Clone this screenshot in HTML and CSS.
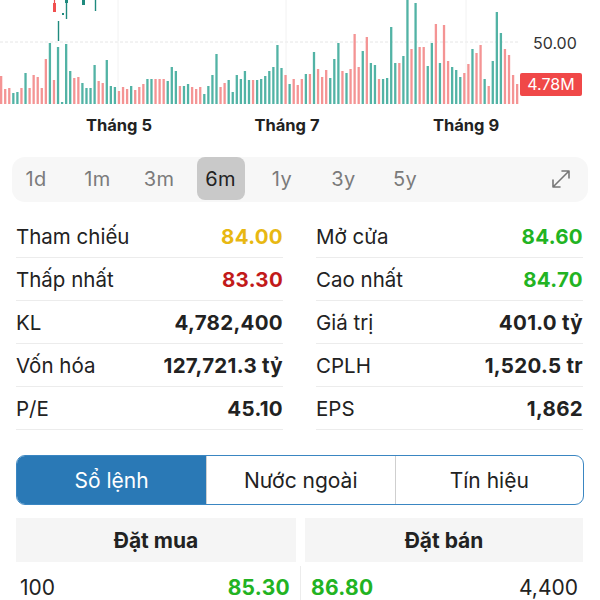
FILE: index.html
```html
<!DOCTYPE html>
<html lang="vi">
<head>
<meta charset="utf-8">
<link rel="stylesheet" href="styles.css">
</head>
<body>
<div class="chart">
  <svg id="bars" class="chart-svg" width="600" height="112" viewBox="0 0 600 112">
    <line x1="0" y1="42" x2="518" y2="42" class="grid" />
    <line x1="118" y1="0" x2="118" y2="104" class="vgrid" />
    <line x1="286" y1="0" x2="286" y2="104" class="vgrid" />
    <line x1="466" y1="0" x2="466" y2="104" class="vgrid" />
    <g id="volbars"></g>
    <rect x="53" y="3" width="3" height="9" class="candle-red" />
    <line x1="54.5" y1="0" x2="54.5" y2="3" class="wick-red" />
    <rect x="65" y="0" width="3" height="3" class="candle-teal" />
    <line x1="66.5" y1="0" x2="66.5" y2="19" class="wick-teal" />
    <rect x="62" y="13" width="2" height="2" class="candle-teal" />
    <line x1="58.5" y1="21" x2="58.5" y2="41" class="wick-teal" />
    <rect x="82" y="0" width="3" height="5" class="candle-teal" />
    <line x1="95.5" y1="0" x2="95.5" y2="11" class="wick-teal" />
  </svg>
  <div class="axis-price">50.00</div>
  <div class="axis-vol">4.78M</div>
</div>
<div class="months">
  <span class="month m5">Tháng 5</span>
  <span class="month m7">Tháng 7</span>
  <span class="month m9">Tháng 9</span>
</div>

<div class="ranges">
  <span class="range">1d</span>
  <span class="range">1m</span>
  <span class="range">3m</span>
  <span class="range active">6m</span>
  <span class="range">1y</span>
  <span class="range">3y</span>
  <span class="range">5y</span>
  <span class="spacer"></span>
  <svg class="expand" width="22" height="22" viewBox="0 0 22 22">
    <path d="M3 19 L19 3 M12 3 H19 V10 M3 12 V19 H10" fill="none" stroke="#777" stroke-width="1.6" stroke-linecap="round" stroke-linejoin="round"/>
  </svg>
</div>

<div class="stats">
  <div class="col">
    <div class="row"><span class="lbl">Tham chiếu</span><span class="val yellow">84.00</span></div>
    <div class="row"><span class="lbl">Thấp nhất</span><span class="val red">83.30</span></div>
    <div class="row"><span class="lbl">KL</span><span class="val">4,782,400</span></div>
    <div class="row"><span class="lbl">Vốn hóa</span><span class="val">127,721.3 tỷ</span></div>
    <div class="row"><span class="lbl">P/E</span><span class="val">45.10</span></div>
  </div>
  <div class="col">
    <div class="row"><span class="lbl">Mở cửa</span><span class="val green">84.60</span></div>
    <div class="row"><span class="lbl">Cao nhất</span><span class="val green">84.70</span></div>
    <div class="row"><span class="lbl">Giá trị</span><span class="val">401.0 tỷ</span></div>
    <div class="row"><span class="lbl">CPLH</span><span class="val">1,520.5 tr</span></div>
    <div class="row"><span class="lbl">EPS</span><span class="val">1,862</span></div>
  </div>
</div>

<div class="tabs">
  <div class="tab active">Sổ lệnh</div>
  <div class="tab">Nước ngoài</div>
  <div class="tab">Tín hiệu</div>
</div>

<div class="book-head">
  <div class="bh">Đặt mua</div>
  <div class="bh">Đặt bán</div>
</div>
<div class="book-row">
  <div class="side buy"><span class="qty">100</span><span class="px green">85.30</span></div>
  <div class="side sell"><span class="px green">86.80</span><span class="qty">4,400</span></div>
</div>
<script src="app.js"></script>
</body>
</html>
```

FILE: app.js
```js
(function () {
  var data = "76r89r88r93t92t88r73t88r75r77r88r59r43t80r47t102t44t71t78r77r83t88t88t65t81r83r60t86t87t91r87r89r" +
    "86t90r87r84r79t79t79r79r79r81t67t71t86r86t84t87r89r87r94t86t75t54t87r83r80t92t75t79t71t80t80r80t" +
    "79t76t71t67t45t68t75r84t79r85r79r74t74r52t69r77r70r78t59t43t71r73t69r34r67r51t37r63t65t79r79t78t" +
    "27t63t63r56t0t49r3t47r47r66t43t24r63t25r61r67t70t77t73r64r49t53r45r79t86r61t12t33t49r55r75r84r";
  var re = /(\d+)([rt])/g, m, items = [];
  while ((m = re.exec(data))) items.push([+m[1], m[2]]);
  var g = document.getElementById("volbars");
  var ns = "http://www.w3.org/2000/svg";
  var step = 516 / (items.length - 1);
  items.forEach(function (it, i) {
    var r = document.createElementNS(ns, "rect");
    var top = Math.max(it[0], 0);
    r.setAttribute("x", (0 + step * i).toFixed(2));
    r.setAttribute("y", top);
    r.setAttribute("width", "2.3");
    r.setAttribute("height", 104 - top);
    r.setAttribute("class", it[1] === "r" ? "vb-red" : "vb-teal");
    g.appendChild(r);
  });
})();
```

FILE: styles.css
```css
* { box-sizing: border-box; }
html, body { margin: 0; padding: 0; background: #fff; }
body {
  width: 600px;
  font-family: Inter, "Noto Sans", "Liberation Sans", sans-serif;
  color: #1c1c1c;
  overflow: hidden;
}

.chart { position: relative; height: 112px; }
.chart-svg { display: block; }
.grid { stroke: #e6e6e6; stroke-width: 1; stroke-dasharray: 3 2; }
.vgrid { stroke: #f2f2f2; stroke-width: 1; }
.vb-red { fill: #f49494; }
.vb-teal { fill: #52b3a5; }
.candle-red { fill: #f04f4f; }
.wick-red { stroke: #f04f4f; stroke-width: 1.2; }
.candle-teal { fill: #1f8a7e; }
.wick-teal { stroke: #1f8a7e; stroke-width: 1.4; }

.axis-price {
  position: absolute;
  left: 533px; top: 33px;
  font-size: 16px;
  color: #333;
}
.axis-vol {
  position: absolute;
  left: 520px; top: 73px;
  width: 62px; height: 23px;
  background: #f04848;
  color: #fff;
  font-size: 16px;
  line-height: 23px;
  text-align: center;
  border-radius: 2px;
}

.months { position: relative; height: 28px; }
.month {
  position: absolute;
  top: 3px;
  font-size: 16.5px;
  font-weight: 700;
  color: #222;
  transform: translateX(-50%);
}
.m5 { left: 119px; }
.m7 { left: 287px; }
.m9 { left: 466px; }

.ranges {
  margin: 17px 12px 0;
  height: 45px;
  background: #f7f7f7;
  border-radius: 13px;
  display: flex;
  align-items: flex-start;
  gap: 13.5px;
  padding: 0 16px 0 0;
}
.range {
  width: 48px;
  height: 43px;
  display: flex;
  align-items: center;
  justify-content: center;
  font-size: 20px;
  letter-spacing: 0.4px;
  color: #7b7b7b;
  border-radius: 8px;
}
.range.active { background: #c9c9c9; color: #222; }
.spacer { flex: 1; }
.expand { margin-top: 11px; }

.stats {
  margin: 13px 16px 0;
  display: grid;
  grid-template-columns: 267px 267px;
  column-gap: 33px;
}
.row {
  height: 43px;
  display: flex;
  align-items: center;
  justify-content: space-between;
  border-bottom: 1px solid #ececec;
  font-size: 20.5px;
}
.lbl { color: #222; }
.val { font-weight: 700; color: #222; letter-spacing: 0.3px; }
.yellow { color: #e8b812; }
.red { color: #c21a1a; }
.green { color: #22b322; }

.tabs {
  margin: 25px 16px 0;
  height: 50px;
  display: flex;
  border: 1.5px solid #3a86c2;
  border-radius: 9px;
  overflow: hidden;
}
.tab {
  flex: 1;
  display: flex;
  align-items: center;
  justify-content: center;
  font-size: 21px;
  color: #222;
  border-left: 1px solid #cfcfcf;
}
.tab:first-child { border-left: none; flex: 0 0 189px; }
.tab.active { background: #2a79b6; color: #fff; }

.book-head {
  margin: 13px 16px 0;
  display: grid;
  grid-template-columns: 280px 278px;
  column-gap: 9px;
}
.bh {
  height: 44px;
  background: #f5f5f5;
  display: flex;
  align-items: center;
  justify-content: center;
  font-size: 21px;
  font-weight: 700;
  color: #222;
}
.book-row {
  margin: 4px 16px 0;
  display: grid;
  grid-template-columns: 285px 282px;
}
.side {
  height: 42px;
  display: flex;
  align-items: center;
  justify-content: space-between;
  font-size: 21px;
}
.buy { padding: 0 10px 0 4px; border-right: 1px solid #ececec; }
.sell { padding: 0 5px 0 10px; }
.px { font-weight: 700; letter-spacing: 0.3px; }
.qty { color: #222; }
```
